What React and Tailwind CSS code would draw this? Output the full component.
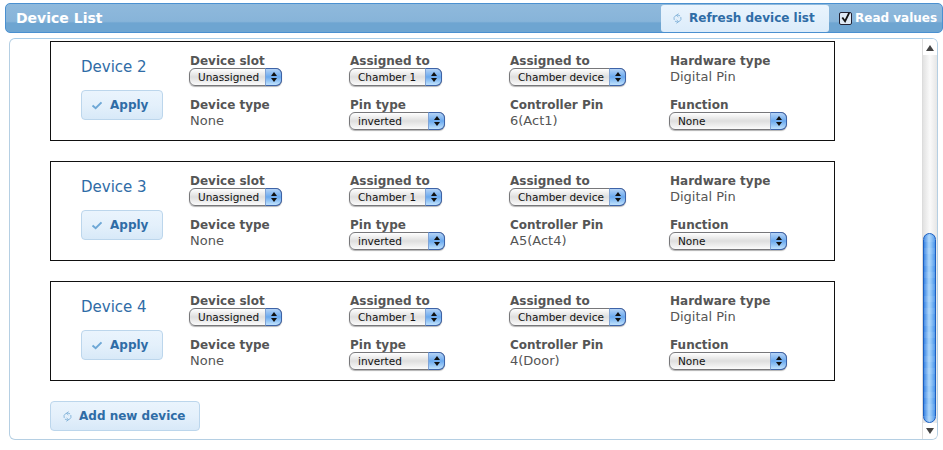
import React from 'react';

const devices = [
  { name: 'Device 2', pin: '6(Act1)' },
  { name: 'Device 3', pin: 'A5(Act4)' },
  { name: 'Device 4', pin: '4(Door)' },
];

const RefreshIcon = ({ className }) => (
  <svg viewBox="0 0 12 12" className={className} fill="none" stroke="currentColor" strokeWidth="1">
    <path d="M8.8 3.2A4 4 0 0 0 2.4 7.6" />
    <path d="M3.2 8.8A4 4 0 0 0 9.6 4.4" />
    <path d="M7 0.6 L5 2.6 L7 4.4" />
    <path d="M5 11.4 L7 9.4 L5 7.6" />
  </svg>
);

const Select = ({ value, width }) => (
  <div
    className="flex h-[18px] rounded-[6px] border border-[#77777a] bg-gradient-to-b from-[#ffffff] via-[#dedede] to-[#fbfbfb] shadow-[0_1px_1px_rgba(0,0,0,0.3)]"
    style={{ width }}
  >
    <span className="flex-1 overflow-hidden whitespace-nowrap pl-[8px] text-[10.5px] leading-[16px] text-[#111]">{value}</span>
    <span className="-my-px -mr-px flex w-[17px] flex-col items-center justify-center gap-[2px] rounded-r-[6px] border border-[#3d63a8] border-l-[#7fa3d6] bg-gradient-to-b from-[#b4d3f6] via-[#6aa9ee] to-[#c0e2fc]">
      <span className="h-0 w-0 border-x-[3px] border-b-[4px] border-x-transparent border-b-[#111]" />
      <span className="h-0 w-0 border-x-[3px] border-t-[4px] border-x-transparent border-t-[#111]" />
    </span>
  </div>
);

const Label = ({ children }) => (
  <div className="h-[15px] pl-px text-[12px] font-bold leading-[17px] text-[#555]">{children}</div>
);

const Field = ({ label, children }) => (
  <div className="h-[44px]">
    <Label>{label}</Label>
    {children}
  </div>
);

const Plain = ({ children }) => (
  <div className="pl-px pt-px text-[13px] leading-[15px] text-[#555]">{children}</div>
);

const DeviceBox = ({ name, pin }) => (
  <div className="flex h-[100px] w-[785px] shrink-0 border border-[#111] bg-white pt-[11px]">
    <div className="ml-[30px] w-[108px]">
      <div className="pt-[4px] text-[15px] leading-[20px] text-[#2f6ca6]">{name}</div>
      <button className="mt-[13px] flex h-[30px] w-[82px] items-center gap-[7px] rounded-[4px] border border-[#bcd6ec] bg-gradient-to-b from-[#eaf4fd] via-[#e4f0fb] to-[#d8e9f8] pl-[9px] text-[12px] font-bold text-[#2f6ca6]">
        <svg viewBox="0 0 12 10" className="h-[9px] w-[12px] text-[#6fa8d6]" fill="none" stroke="currentColor" strokeWidth="2.2">
          <path d="M1 5 L4.5 8 L11 1.5" />
        </svg>
        Apply
      </button>
    </div>
    <div className="grid grid-cols-[160px_160px_160px_160px] content-start">
      <Field label="Device slot"><Select value="Unassigned" width={93} /></Field>
      <Field label="Assigned to"><Select value="Chamber 1" width={93} /></Field>
      <Field label="Assigned to"><Select value="Chamber device" width={117} /></Field>
      <Field label="Hardware type"><Plain>Digital Pin</Plain></Field>
      <Field label="Device type"><Plain>None</Plain></Field>
      <Field label="Pin type"><Select value="inverted" width={96} /></Field>
      <Field label="Controller Pin"><Plain>{pin}</Plain></Field>
      <Field label="Function"><Select value="None" width={118} /></Field>
    </div>
  </div>
);

const Scrollbar = () => (
  <div className="flex w-[15px] shrink-0 flex-col border-l border-[#dcdcdc] bg-gradient-to-r from-[#e2e2e2] via-[#fafafa] to-[#e6e6e6]">
    <div className="flex h-[16px] items-center justify-center bg-white pt-[2px]">
      <span className="h-0 w-0 border-x-[4px] border-b-[6px] border-x-transparent border-b-[#444]" />
    </div>
    <div className="flex-1 pt-[178px]">
      <div className="h-[190px] w-[13px] rounded-full border border-[#1c5fc0] bg-[repeating-linear-gradient(0deg,rgba(255,255,255,0.08)_0px,rgba(255,255,255,0.08)_6px,rgba(255,255,255,0)_6px,rgba(255,255,255,0)_12px),linear-gradient(90deg,#3b86e4,#a9d4fb_45%,#8ec3f6_65%,#4a94ea)]" />
    </div>
    <div className="flex h-[16px] items-center justify-center bg-white">
      <span className="h-0 w-0 border-x-[4px] border-t-[6px] border-x-transparent border-t-[#444]" />
    </div>
  </div>
);

export default function App() {
  return (
    <div className="h-[450px] w-[943px] overflow-hidden bg-white pt-[3px] font-['DejaVu_Sans',sans-serif]">
      <div className="ml-[5px] flex h-[30px] w-[938px] items-center rounded-[5px] border border-[#4a90d0] bg-[linear-gradient(180deg,#8fb9dc_0%,#87b4d9_62%,#6ea5d1_68%,#6ea5d1_100%)] pl-[10px]">
        <span className="w-[645px] text-[14px] font-bold text-white">Device List</span>
        <button className="flex h-[27px] w-[168px] items-center gap-[6px] rounded-[3px] bg-gradient-to-b from-[#eaf4fd] to-[#dcecfa] pl-[11px] text-[12px] font-bold text-[#2f6ca6]">
          <RefreshIcon className="h-[11px] w-[11px] text-[#7fb0d8]" />
          Refresh device list
        </button>
        <span className="ml-[10px] flex h-[13px] w-[13px] items-center justify-center rounded-[2px] border border-[#223] bg-[#dfeaf5]">
          <svg viewBox="0 0 12 12" className="h-[12px] w-[12px] text-[#111]" fill="none" stroke="currentColor" strokeWidth="2">
            <path d="M2.5 5.5 L5.5 9.5 L10 0.5" />
          </svg>
        </span>
        <span className="ml-[3px] text-[12px] font-bold text-white">Read values</span>
      </div>
      <div className="ml-[9px] mt-[5px] flex h-[402px] w-[929px] overflow-hidden rounded-[6px] border border-[#b5cfe3] border-t-[#a9cde8]">
        <div className="flex flex-1 flex-col gap-[20px] pl-[40px] pt-[2px]">
          {devices.map((d) => (
            <DeviceBox key={d.name} {...d} />
          ))}
          <button className="flex h-[30px] w-[150px] items-center gap-[6px] rounded-[4px] border border-[#bcd6ec] bg-gradient-to-b from-[#eaf4fd] via-[#e4f0fb] to-[#d8e9f8] pl-[11px] text-[12px] font-bold text-[#2f6ca6]">
            <RefreshIcon className="h-[11px] w-[11px] text-[#7fb0d8]" />
            Add new device
          </button>
        </div>
        <Scrollbar />
      </div>
    </div>
  );
}
